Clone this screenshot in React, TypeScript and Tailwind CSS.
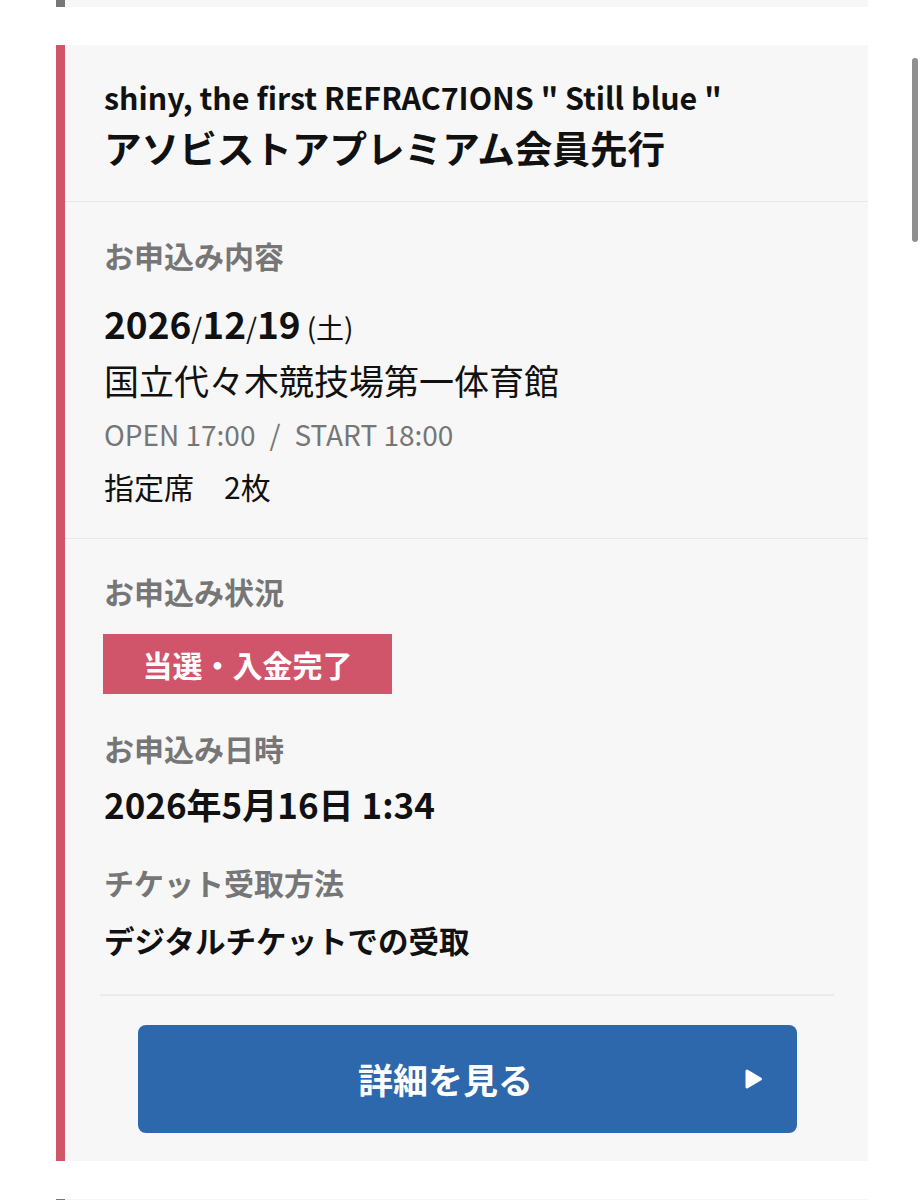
import clsx from "clsx";

const font = { fontFamily: '"Noto Sans CJK JP", "Noto Sans", sans-serif' };

function Label({ children, className }: { children: React.ReactNode; className?: string }) {
  return (
    <p className={clsx("text-[30px] leading-[40px] font-bold text-[#767676]", className)}>
      {children}
    </p>
  );
}

function Card({ bar, className, children }: { bar: string; className?: string; children?: React.ReactNode }) {
  return (
    <div className={clsx("flex bg-[#f7f7f7]", className)}>
      <div className={clsx("w-[9px] shrink-0", bar)} />
      <div className="flex-1 min-w-0">{children}</div>
    </div>
  );
}

export default function App() {
  return (
    <div className="relative min-h-[1200px] bg-white overflow-hidden" style={font}>
      <div className="flex flex-col gap-[38px] ml-[56px] w-[812px]">
        <Card bar="bg-[#777777]" className="h-[7px]" />

        <Card bar="bg-[#d0546a]" className="h-[1116px]">
          {/* title */}
          <div className="h-[156px] px-[39px] pt-[34px] text-[#111]">
            <h2 className="text-[30.4px] leading-[36px] font-bold">
              shiny, the first REFRAC7IONS " Still blue "
            </h2>
            <h1 className="mt-[6px] text-[37.6px] leading-[52px] font-bold">
              アソビストアプレミアム会員先行
            </h1>
          </div>

          {/* application details */}
          <div className="h-[337px] border-t border-[#e8e8e8] px-[39px] pt-[33px] text-[#111]">
            <Label>お申込み内容</Label>
            <p className="mt-[30px] h-[48px] leading-[48px] font-bold">
              <span className="text-[37px] leading-none">2026</span>
              <span className="text-[28px] leading-none font-normal">/</span>
              <span className="text-[37px] leading-none">12</span>
              <span className="text-[28px] leading-none font-normal">/</span>
              <span className="text-[37px] leading-none">19</span>
              <span className="ml-[6px] text-[28px] leading-none font-normal">(土)</span>
            </p>
            <p className="mt-[3px] text-[35px] leading-[48px]">国立代々木競技場第一体育館</p>
            <p className="mt-[11px] text-[28px] leading-[38px] text-[#767676]">
              OPEN 17:00<span className="mx-[14px]">/</span>START 18:00
            </p>
            <p className="mt-[13px] text-[30px] leading-[40px]">指定席　2枚</p>
          </div>

          {/* status */}
          <div className="border-t border-[#e8e8e8] pt-[32px] text-[#111]">
            <div className="px-[39px]">
              <Label>お申込み状況</Label>
              <div className="mt-[23px] -ml-[1px] flex h-[60px] w-[289px] items-center justify-center bg-[#d0546a] text-[30px] font-bold text-white">
                当選・入金完了
              </div>
              <Label className="mt-[34px]">お申込み日時</Label>
              <p className="mt-[14px] text-[35px] leading-[44px] font-bold">2026年5月16日 1:34</p>
              <Label className="mt-[36px]">チケット受取方法</Label>
              <p className="mt-[18px] text-[30.5px] leading-[40px] font-bold">デジタルチケットでの受取</p>
            </div>
            <div className="mt-[34px] ml-[35px] mr-[34px] h-[2px] bg-[#ebebeb]" />
            <div className="pt-[29px] pl-[73px] pr-[71px]">
              <button className="relative flex h-[108px] w-full items-center justify-center rounded-[8px] bg-[#2d67ac] pr-[44px] text-[35px] font-bold text-white">
                詳細を見る
                <svg className="absolute right-[34px] top-1/2 -translate-y-1/2" width="19" height="21" viewBox="0 0 19 21">
                  <path d="M3 2.5 L16.5 10.5 L3 18.5 Z" fill="white" stroke="white" strokeWidth="3" strokeLinejoin="round" />
                </svg>
              </button>
            </div>
          </div>
        </Card>

        <Card bar="bg-[#777777]" className="h-[40px]" />
      </div>

      {/* scrollbar */}
      <div className="absolute left-[912px] top-[58px] h-[184px] w-[6px] rounded-full bg-[#8f8f8f]" />
    </div>
  );
}
